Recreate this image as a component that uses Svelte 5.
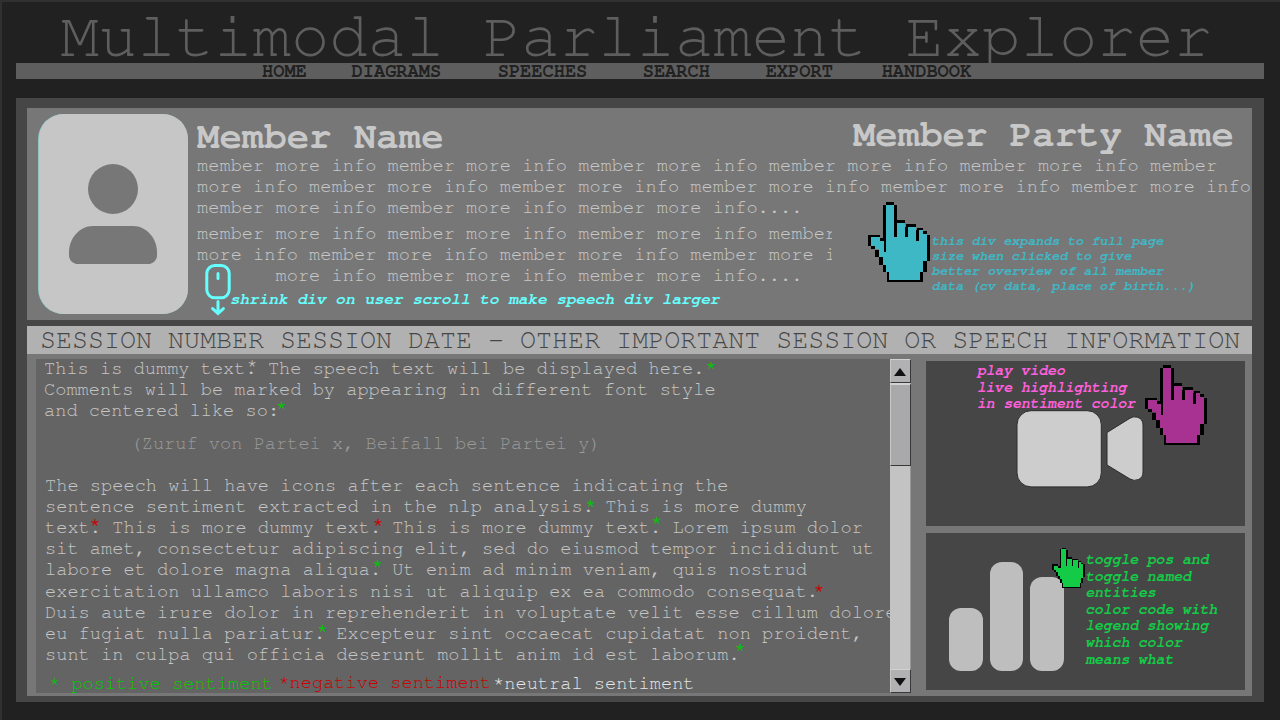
<script>
  const nav = [
    { label: 'HOME', gap: 0 },
    { label: 'DIAGRAMS', gap: 44.8 },
    { label: 'SPEECHES', gap: 56.6 },
    { label: 'SEARCH', gap: 55.4 },
    { label: 'EXPORT', gap: 55.8 },
    { label: 'HANDBOOK', gap: 48.8 }
  ];

  const info = 'member more info ';
  const bioTop = [info.repeat(5) + 'member', 'more info ' + info.repeat(5).trim(), info.repeat(3).trim() + '....'].join('\n');
  const bioBottom = [
    info.repeat(3) + 'member',
    'more info ' + info.repeat(2) + 'member more i',
    '       more info ' + info.repeat(2).trim() + '....'
  ].join('\n');

  const intro = [
    'This is dummy text. The speech text will be displayed here.',
    'Comments will be marked by appearing in different font style',
    'and centered like so:'
  ].join('\n');

  const speech = [
    'The speech will have icons after each sentence indicating the',
    'sentence sentiment extracted in the nlp analysis. This is more dummy',
    'text. This is more dummy text. This is more dummy text. Lorem ipsum dolor',
    'sit amet, consectetur adipiscing elit, sed do eiusmod tempor incididunt ut',
    'labore et dolore magna aliqua. Ut enim ad minim veniam, quis nostrud',
    'exercitation ullamco laboris nisi ut aliquip ex ea commodo consequat.',
    'Duis aute irure dolor in reprehenderit in voluptate velit esse cillum dolore',
    'eu fugiat nulla pariatur. Excepteur sint occaecat cupidatat non proident,',
    'sunt in culpa qui officia deserunt mollit anim id est laborum.'
  ].join('\n');

  // centre of each sentiment marker, relative to the speech area
  const marks = [
    [215.5, 4.5, 'neu'], [674.5, 7, 'pos'], [245, 47, 'pos'],
    [554, 145, 'pos'], [58.5, 164, 'neg'], [341.5, 164, 'neg'], [620, 162, 'pos'],
    [341, 205, 'pos'], [782.5, 230, 'neg'], [286, 270, 'pos'], [703.5, 289, 'pos']
  ];
</script>

{#snippet hand(color)}
  <svg class="hand-svg" viewBox="0 0 186 240" preserveAspectRatio="none" shape-rendering="crispEdges">
    <path fill={color} d="M53 8H78V64H112V74H145V85H164V96H176V178H166V209H156V234H63V210H55V188H44V166H33V142H21V133H9V106H36V118H47V8Z" />
    <path fill="#000" d="M55 0H78V8H55ZM46 8H53V151H48V118H46ZM78 9H88V55H110V64H86V106H78ZM114 67H144V74H119V106H112V74H114ZM146 77H164V85H152V118H145V85H146ZM164 87H176V96H164ZM176 98H186V176H176ZM165 178H176V209H165ZM155 209H164V240H56V210H63V233H155ZM45 188H55V209H45ZM33 166H44V188H33ZM21 143H33V166H21ZM9 133H21V142H9ZM0 98H36V106H9V131H0ZM36 109H51V118H36Z" />
  </svg>
{/snippet}

<div class="page">
  <header>
    <h1>Multimodal Parliament Explorer</h1>
    <nav>
      {#each nav as item}
        <a style:margin-left="{item.gap}px">{item.label}</a>
      {/each}
    </nav>
  </header>

  <main>
    <section class="member">
      <svg class="avatar" width="150" height="200" viewBox="0 0 150 200">
        <rect width="150" height="200" rx="25" fill="#7fc4c4" />
        <rect x="0.700" width="149.300" height="200" rx="25" fill="#c6c6c6" />
        <circle cx="75" cy="75" r="25" fill="#777" />
        <path fill="#777" d="M55 112H95C109 112 119 125 119 138V142Q119 147 112 150H38Q31 147 31 142V138C31 125 41 112 55 112Z" />
      </svg>
      <div class="bio">
        <div class="names"><h2>Member Name</h2><h2 class="party">Member Party Name</h2></div>
        <pre class="top">{bioTop}</pre>
        <pre class="bottom">{bioBottom}</pre>
      </div>
      <svg class="scroll-icon" width="26" height="52" viewBox="0 0 26 52" fill="none" stroke="#66ffff" stroke-width="3">
        <rect x="1.8" y="1.5" width="22.4" height="32.3" rx="8" />
        <path d="M13 9.5V14.5M13 37.5V48M7.6 44.6L13 49.4L18.4 44.6" stroke-linecap="round" />
      </svg>
      <pre class="note shrink">shrink div on user scroll to make speech div larger</pre>
      <div class="hand teal">{@render hand('#3fb8c6')}</div>
      <pre class="note expand">this div expands to full page
size when clicked to give
better overview of all member
data (cv data, place of birth...)</pre>
    </section>

    <div class="session">SESSION NUMBER SESSION DATE – OTHER IMPORTANT SESSION OR SPEECH INFORMATION</div>

    <section class="lower">
      <div class="speech">
        <div class="text">
          <pre class="intro">{intro}</pre>
          <pre class="comment">(Zuruf von Partei x, Beifall bei Partei y)</pre>
          <pre class="body">{speech}</pre>
          <div class="legend">
            <span class="pos">* positive sentiment</span>
            <span class="neg">*negative sentiment</span>
            <span class="neu">*neutral sentiment</span>
          </div>
          {#each marks as [x, y, kind]}
            <span class="mark {kind}" style:left="{x}px" style:top="{y}px">*</span>
          {/each}
        </div>
        <div class="scrollbar">
          <div class="btn"><svg width="12" height="8"><path d="M0 8L6 0L12 8Z" fill="#111" /></svg></div>
          <div class="thumb"></div>
          <div class="track"></div>
          <div class="btn down"><svg width="12" height="8"><path d="M0 0L6 8L12 0Z" fill="#111" /></svg></div>
        </div>
      </div>

      <aside>
        <div class="card video">
          <svg width="128" height="78" viewBox="0 0 128 78" fill="#cdcdcd" stroke="#2c2c2c" stroke-width="1">
            <rect x="1" y="0.700" width="84.300" height="76.200" rx="14" />
            <path d="M91 22.5L114 8.2Q117.500 6 121.500 7.200Q127 9 127 15V62Q127 67.500 122.500 69.500Q118 71.500 114 69L91 55Z" />
          </svg>
          <pre class="note play">play video
live highlighting
in sentiment color</pre>
          <div class="hand purple">{@render hand('#a83291')}</div>
        </div>
        <div class="card chart">
          <i class="b1"></i><i class="b2"></i><i class="b3"></i>
          <pre class="note toggle">toggle pos and
toggle named
entities
color code with
legend showing
which color
means what</pre>
          <div class="hand green">{@render hand('#14cb47')}</div>
        </div>
      </aside>
    </section>
  </main>
</div>

<style>
  :global(body) { margin: 0; background: #212121; }
  * { box-sizing: border-box; }
  .page {
    width: 1280px; height: 720px; overflow: hidden;
    background: #212121;
    border-top: 2px solid #303030; border-left: 2px solid #303030;
    font: 18.667px/21.15px "Courier 10 Pitch", "Nimbus Mono PS", "Nimbus Mono L", FreeMono, "Liberation Mono", monospace;
  }
  pre { margin: 0; font: inherit; }
  header { height: 96px; padding-right: 16px; padding-left: 14px; }
  h1 {
    margin: 0; height: 61px; padding-left: 44.5px;
    font-size: 64px; line-height: 70.5px; font-weight: 400; white-space: nowrap; color: #5e5e5e;
  }
  nav {
    display: flex; height: 16px; padding-left: 246px;
    background: #5e5e5e; color: #212121; font-weight: 700; line-height: 18.5px;
  }
  main {
    width: 1248px; height: 604px; margin-left: 14px; padding: 10px 12px 6px 11px;
    background: #464646;
  }
  .member {
    position: relative; display: flex; height: 212px; padding: 6px 0 0 11px;
    background: #777; color: #c8c8c8;
  }
  .avatar { flex: none; }
  .bio { margin-left: 9px; width: 1055px; overflow: hidden; letter-spacing: 0.018px; }
  .names { display: flex; justify-content: space-between; height: 40.5px; padding: 2px 18px 0 0; }
  h2 { margin: 0; font-size: 37.333px; line-height: 42.3px; font-weight: 700; }
  .party { margin-top: -2px; }
  .bottom { width: 635px; margin-top: 5px; line-height: 21px; overflow: hidden; }
  .note { position: absolute; font-weight: 700; font-style: italic; }
  .scroll-icon { position: absolute; left: 178px; top: 156px; }
  .shrink { left: 203px; top: 181.500px; font-size: 16px; line-height: 18px; color: #66ffff; }
  .expand { left: 904.500px; top: 126px; font-size: 13.333px; line-height: 15.1px; color: #3fb8c6; }
  .hand { position: absolute; width: 62px; height: 80px; }
  .hand-svg { display: block; width: 100%; height: 100%; }
  .teal { left: 841px; top: 94px; }
  .session {
    height: 28px; margin-top: 6px; padding-left: 13px; background: #b1b1b1; color: #464646;
    font-size: 26.667px; line-height: 28.500px; white-space: pre; letter-spacing: 0.01px;
  }
  .lower {
    display: flex; height: 342px; padding: 5px 7px 3px 9px; gap: 15px; background: #777;
  }
  .speech { display: flex; width: 875px; height: 334px; background: #646464; color: #c6c6c6; }
  .text { position: relative; width: 854px; padding-left: 8px; overflow: hidden; }
  .intro { margin-top: -1px; }
  .comment { margin: 11.5px 0 0 86.500px; color: #9a9a9a; }
  .body { margin: 20.500px 0 0 1px; letter-spacing: 0.01px; line-height: 21.2px; }
  .legend { display: flex; margin: 8px 0 0 5px; white-space: pre; }
  .legend .neg { margin: -1px 0 0 5.500px; }
  .legend .neu { margin-left: 2px; color: #e6e6e6; }
  .pos { color: #00c800; }
  .neg { color: #cc0000; }
  .mark {
    position: absolute; width: 11.2px; height: 21px; margin: -9px 0 0 -5.1px;
  }
  .mark.pos, .mark.neg { -webkit-text-stroke: 0.3px currentColor; }
  .scrollbar { display: flex; flex-direction: column; width: 21px; background: #c3c3c3; }
  .btn, .thumb {
    border: 1px solid; border-color: #d2d2d2 #38383a #38383a #c8c8c8; background: #a9a9ab;
  }
  .btn { display: grid; place-items: center; height: 24px; flex: none; padding-top: 1px; background: #b1b1b3; }
  .btn svg { display: block; margin: 1px 0 0 -1px; }
  .thumb { height: 83px; flex: none; border-top-width: 2px; }
  .track { flex: 1; border-right: 1px solid #999; }
  aside { display: flex; flex-direction: column; width: 319px; padding-top: 2px; gap: 7px; }
  .card { position: relative; background: #464646; }
  .video { height: 165px; padding: 49px 0 0 90px; }
  .play { left: 51px; top: 2px; font-size: 14.667px; line-height: 16.6px; color: #ff5fdc; }
  .purple { left: 219px; top: 4px; }
  .chart { display: flex; align-items: flex-end; gap: 7.200px; height: 157px; padding: 0 0 18.600px 23.300px; }
  .chart i { width: 33.300px; border-radius: 12px; background: #bebebe; }
  .b1 { height: 63px; }
  .b2 { height: 109.500px; }
  .b3 { height: 94px; }
  .toggle { left: 159.500px; top: 19px; font-size: 14.667px; line-height: 16.6px; color: #14cb47; }
  .green { left: 126px; top: 15px; width: 33px; height: 40px; }
</style>
